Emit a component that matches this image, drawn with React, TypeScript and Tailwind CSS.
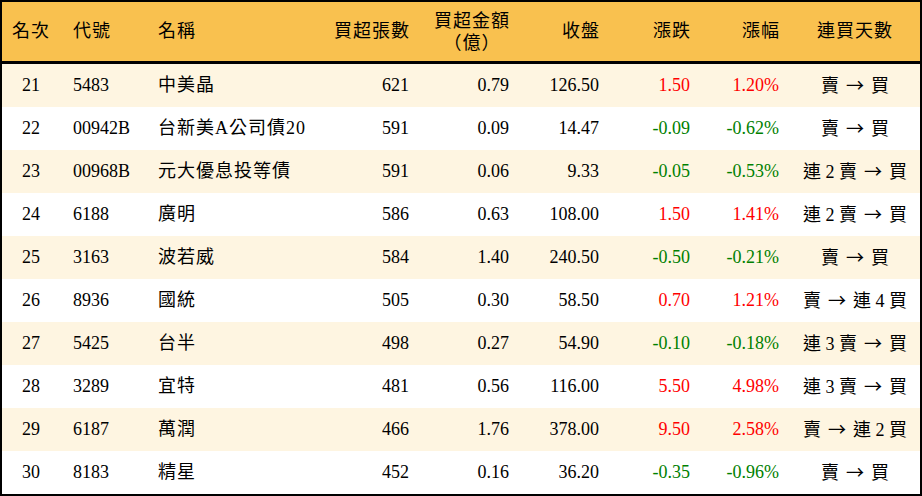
const rows = [
  { rank: 21, code: "5483", name: "中美晶", vol: "621", amt: "0.79", close: "126.50", chg: "1.50", pct: "1.20%", up: true, sell: "賣", buy: "買" },
  { rank: 22, code: "00942B", name: "台新美A公司債20", vol: "591", amt: "0.09", close: "14.47", chg: "-0.09", pct: "-0.62%", up: false, sell: "賣", buy: "買" },
  { rank: 23, code: "00968B", name: "元大優息投等債", vol: "591", amt: "0.06", close: "9.33", chg: "-0.05", pct: "-0.53%", up: false, sell: "連 2 賣", buy: "買" },
  { rank: 24, code: "6188", name: "廣明", vol: "586", amt: "0.63", close: "108.00", chg: "1.50", pct: "1.41%", up: true, sell: "連 2 賣", buy: "買" },
  { rank: 25, code: "3163", name: "波若威", vol: "584", amt: "1.40", close: "240.50", chg: "-0.50", pct: "-0.21%", up: false, sell: "賣", buy: "買" },
  { rank: 26, code: "8936", name: "國統", vol: "505", amt: "0.30", close: "58.50", chg: "0.70", pct: "1.21%", up: true, sell: "賣", buy: "連 4 買" },
  { rank: 27, code: "5425", name: "台半", vol: "498", amt: "0.27", close: "54.90", chg: "-0.10", pct: "-0.18%", up: false, sell: "連 3 賣", buy: "買" },
  { rank: 28, code: "3289", name: "宜特", vol: "481", amt: "0.56", close: "116.00", chg: "5.50", pct: "4.98%", up: true, sell: "連 3 賣", buy: "買" },
  { rank: 29, code: "6187", name: "萬潤", vol: "466", amt: "1.76", close: "378.00", chg: "9.50", pct: "2.58%", up: true, sell: "賣", buy: "連 2 買" },
  { rank: 30, code: "8183", name: "精星", vol: "452", amt: "0.16", close: "36.20", chg: "-0.35", pct: "-0.96%", up: false, sell: "賣", buy: "買" },
];

const grid = "grid grid-cols-[58px_85px_155px_120px_100px_90px_91px_89px_130px]";

const App = () => {
  return (
    <div className="w-[922px] h-[496px] bg-white border-2 border-black font-['Liberation_Serif','Noto_Sans_CJK_TC',serif] text-[18px] text-black overflow-hidden">
      {/* Header */}
      <div className={`${grid} h-[62px] bg-[#f9c14f] border-b-[3px] border-black items-center tracking-[1px]`}>
        <div className="text-center">名次</div>
        <div className="pl-[13px]">代號</div>
        <div className="pl-[13px]">名稱</div>
        <div className="text-right pr-[10px]">買超張數</div>
        <div className="flex justify-end pr-[10px]">
          <div className="text-center leading-[22px]">
            <div>買超金額</div>
            <div>（億）</div>
          </div>
        </div>
        <div className="text-right pr-[10px]">收盤</div>
        <div className="text-right pr-[10px]">漲跌</div>
        <div className="text-right pr-[10px]">漲幅</div>
        <div className="text-center">連買天數</div>
      </div>

      {/* Rows */}
      {rows.map((r, i) => (
        <div key={r.rank} className={`${grid} h-[43px] items-center ${i % 2 === 0 ? "bg-[#fef5e1]" : "bg-white"}`}>
          <div className="text-center">{r.rank}</div>
          <div className="pl-[13px]">{r.code}</div>
          <div className="pl-[13px] tracking-[1px] whitespace-nowrap">{r.name}</div>
          <div className="text-right pr-[11px]">{r.vol}</div>
          <div className="text-right pr-[11px]">{r.amt}</div>
          <div className="text-right pr-[11px]">{r.close}</div>
          <div className={`text-right pr-[11px] ${r.up ? "text-[#ff0000]" : "text-[#008000]"}`}>{r.chg}</div>
          <div className={`text-right pr-[11px] ${r.up ? "text-[#ff0000]" : "text-[#008000]"}`}>{r.pct}</div>
          <div className="text-center whitespace-nowrap">
            {r.sell}
            <span className="font-['Noto_Sans_CJK_TC',sans-serif] mx-[7px]">→</span>
            {r.buy}
          </div>
        </div>
      ))}
    </div>
  );
};

export default App;
